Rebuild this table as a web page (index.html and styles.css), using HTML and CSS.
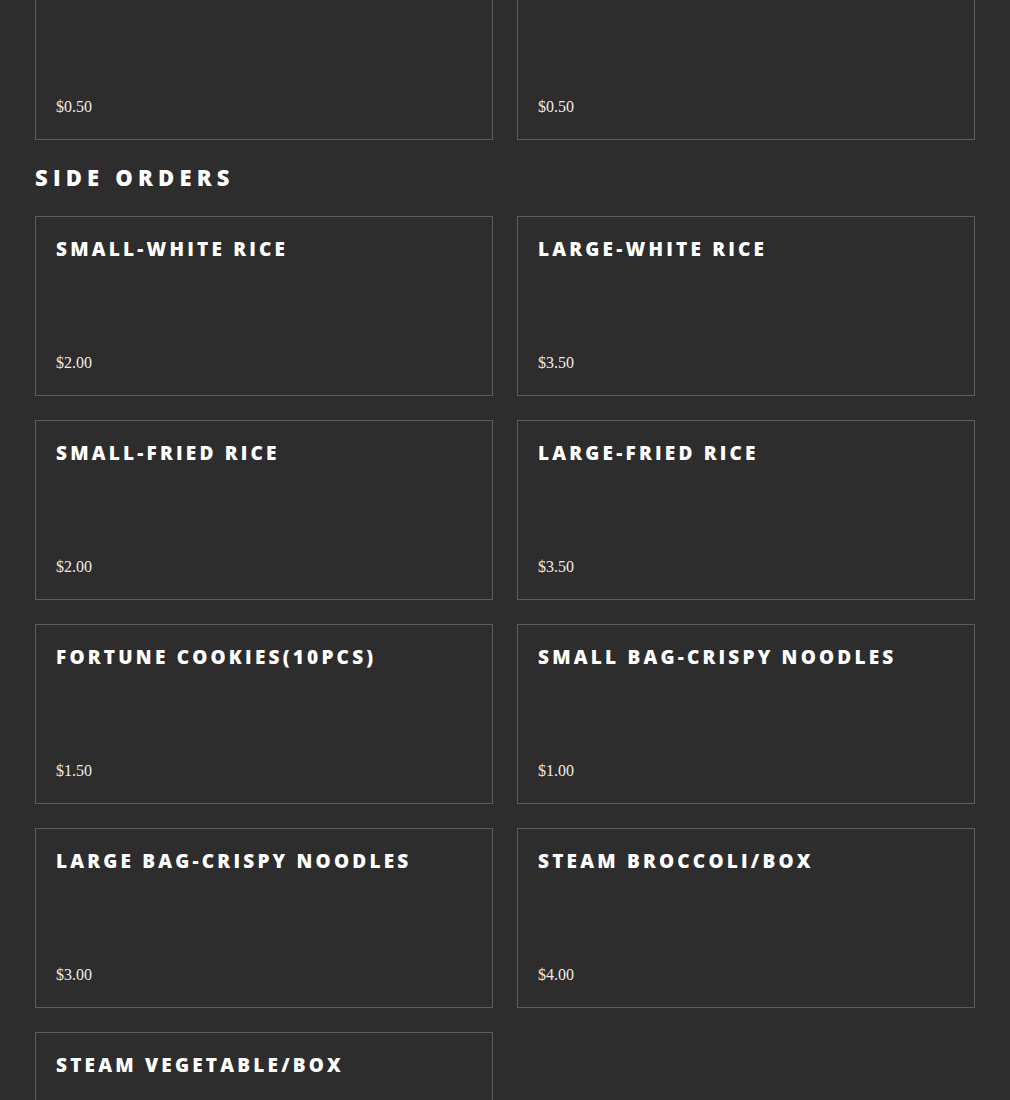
FILE: index.html
```html
<!DOCTYPE html>
<html lang="en">
<head>
<meta charset="utf-8">
<title>Menu - Side Orders</title>
<link rel="stylesheet" href="styles.css">
</head>
<body>
<main class="menu">
  <div class="grid grid-top">
    <div class="card"><h3 class="card-title"></h3><p class="price">$0.50</p></div>
    <div class="card"><h3 class="card-title"></h3><p class="price">$0.50</p></div>
  </div>
  <h2 class="section-title">Side Orders</h2>
  <div class="grid">
    <div class="card"><h3 class="card-title">Small-White Rice</h3><p class="price">$2.00</p></div>
    <div class="card"><h3 class="card-title">Large-White Rice</h3><p class="price">$3.50</p></div>
    <div class="card"><h3 class="card-title">Small-Fried Rice</h3><p class="price">$2.00</p></div>
    <div class="card"><h3 class="card-title">Large-Fried Rice</h3><p class="price">$3.50</p></div>
    <div class="card"><h3 class="card-title">Fortune Cookies(10pcs)</h3><p class="price">$1.50</p></div>
    <div class="card"><h3 class="card-title">Small Bag-Crispy Noodles</h3><p class="price">$1.00</p></div>
    <div class="card"><h3 class="card-title">Large Bag-Crispy Noodles</h3><p class="price">$3.00</p></div>
    <div class="card"><h3 class="card-title">Steam Broccoli/Box</h3><p class="price">$4.00</p></div>
    <div class="card"><h3 class="card-title">Steam Vegetable/Box</h3><p class="price"></p></div>
  </div>
</main>
</body>
</html>
```
FILE: styles.css
```css
html, body {
  margin: 0;
  padding: 0;
  background: #2d2d2d;
  overflow: hidden;
}
.menu {
  width: 940px;
  padding-left: 35px;
  margin-top: -40px;
}
.grid {
  display: grid;
  grid-template-columns: 458px 458px;
  column-gap: 24px;
  row-gap: 24px;
}
.card {
  box-sizing: border-box;
  height: 180px;
  border: 1px solid #5c5c5c;
  padding: 20px;
  display: flex;
  flex-direction: column;
  justify-content: space-between;
}
.card-title {
  margin: 0;
  font-family: "Open Sans", sans-serif;
  font-weight: 800;
  font-size: 19px;
  line-height: 1.362;
  letter-spacing: 3.2px;
  text-transform: uppercase;
  color: #ffffff;
  min-height: 26px;
}
.price {
  margin: 0;
  font-family: "Liberation Serif", serif;
  font-size: 16px;
  line-height: 24px;
  min-height: 24px;
  color: #ececec;
}
.section-title {
  margin: 22px 0 24px;
  font-family: "Open Sans", sans-serif;
  font-weight: 800;
  font-size: 22px;
  line-height: 30px;
  letter-spacing: 5.2px;
  text-transform: uppercase;
  color: #ffffff;
}
```
